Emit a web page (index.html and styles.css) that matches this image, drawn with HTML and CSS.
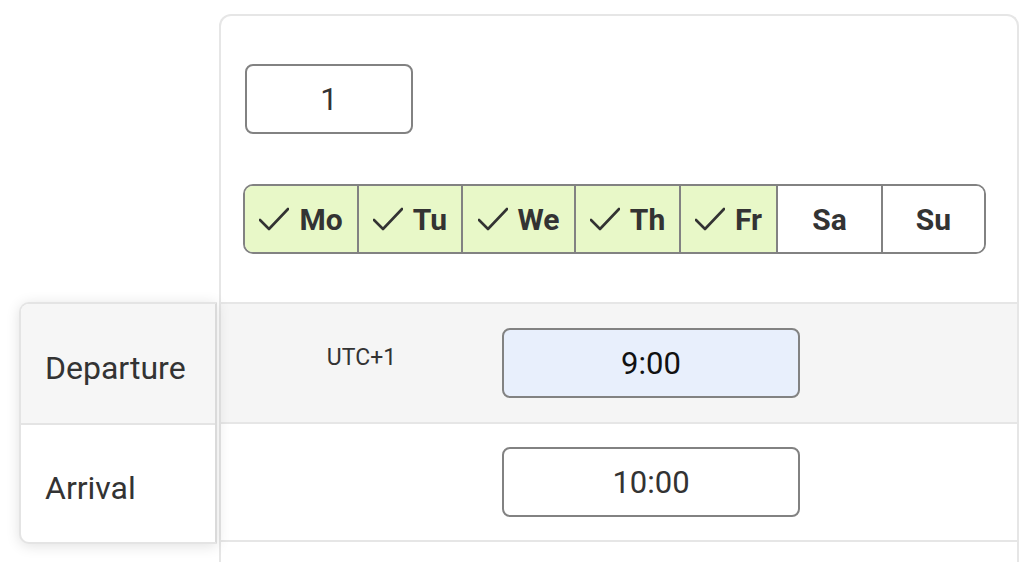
FILE: index.html
```html
<!DOCTYPE html>
<html lang="en">
<head>
<meta charset="utf-8">
<title>Schedule</title>
<link rel="stylesheet" href="styles.css">
</head>
<body>
<div class="page">
  <div class="labels">
    <div class="label-row label-row--shaded">Departure</div>
    <div class="label-row">Arrival</div>
  </div>
  <div class="card">
    <div class="card-top">
      <div class="count-input">1</div>
      <div class="days">
        <div class="day day--on"><svg class="check" viewBox="0 0 30 24" width="30" height="24"><polyline points="1,13 10,22 29,2"/></svg><span>Mo</span></div>
        <div class="day day--on"><svg class="check" viewBox="0 0 30 24" width="30" height="24"><polyline points="1,13 10,22 29,2"/></svg><span>Tu</span></div>
        <div class="day day--on"><svg class="check" viewBox="0 0 30 24" width="30" height="24"><polyline points="1,13 10,22 29,2"/></svg><span>We</span></div>
        <div class="day day--on"><svg class="check" viewBox="0 0 30 24" width="30" height="24"><polyline points="1,13 10,22 29,2"/></svg><span>Th</span></div>
        <div class="day day--on"><svg class="check" viewBox="0 0 30 24" width="30" height="24"><polyline points="1,13 10,22 29,2"/></svg><span>Fr</span></div>
        <div class="day"><span>Sa</span></div>
        <div class="day"><span>Su</span></div>
      </div>
    </div>
    <div class="rows">
      <div class="row row--shaded">
        <div class="tz">UTC+1</div>
        <div class="time time--active">9:00</div>
      </div>
      <div class="row">
        <div class="tz"></div>
        <div class="time">10:00</div>
      </div>
    </div>
  </div>
</div>
</body>
</html>
```

FILE: styles.css
```css
* { box-sizing: border-box; }

html, body {
  margin: 0;
  padding: 0;
  background: #ffffff;
  font-family: Roboto, "Liberation Sans", Arial, sans-serif;
  color: #333333;
  overflow: hidden;
}

.page {
  display: flex;
  align-items: flex-start;
  padding: 14px 0 0 19px;
  height: 562px;
}

.labels {
  position: relative;
  z-index: 1;
  width: 198px;
  margin-top: 288px;
  background: #ffffff;
  border: 2px solid #e4e4e4;
  border-right-color: #dadada;
  border-radius: 10px 0 0 10px;
  box-shadow: 0 2px 14px rgba(0, 0, 0, 0.12);
  overflow: hidden;
}

.label-row {
  height: 119px;
  display: flex;
  align-items: center;
  padding: 8px 0 0 24px;
  font-size: 32px;
  color: #333333;
}

.label-row + .label-row {
  border-top: 2px solid #e4e4e4;
}

.label-row--shaded { background: #f6f6f6; }

.card {
  margin-left: 2px;
  width: 800px;
  height: 560px;
  border: 2px solid #e6e6e6;
  border-bottom: none;
  border-radius: 12px 12px 0 0;
  background: #ffffff;
}

.card-top {
  padding: 48px 0 48px 22px;
}

.count-input {
  margin-left: 2px;
  width: 168px;
  height: 70px;
  border: 2px solid #828282;
  border-radius: 8px;
  display: flex;
  align-items: center;
  justify-content: center;
  font-size: 31px;
  color: #333333;
}

.days {
  margin-top: 50px;
  width: 743px;
  height: 70px;
  display: grid;
  grid-template-columns: 112px 104px 113px 105px 97px 105px 1fr;
  border: 2px solid #828282;
  border-radius: 10px;
  overflow: hidden;
}

.day {
  display: flex;
  align-items: center;
  justify-content: center;
  gap: 10px;
  font-size: 30px;
  font-weight: 700;
  color: #333333;
  background: #ffffff;
}

.day + .day { border-left: 2px solid #828282; }

.day--on { background: #e8f8c8; }

.check {
  fill: none;
  stroke: #333333;
  stroke-width: 2.6;
  stroke-linecap: round;
  stroke-linejoin: round;
  flex: none;
}

.rows { display: flex; flex-direction: column; }

.row {
  height: 120px;
  border-top: 2px solid #e6e6e6;
  display: grid;
  grid-template-columns: 281px 298px 1fr;
  align-items: center;
}

.row:last-child { border-bottom: 2px solid #e6e6e6; }

.row--shaded { background: #f5f5f5; }

.tz {
  align-self: start;
  padding-top: 40px;
  text-align: center;
  font-size: 23px;
  color: #333333;
}

.time {
  height: 70px;
  border: 2px solid #828282;
  border-radius: 8px;
  background: #ffffff;
  display: flex;
  align-items: center;
  justify-content: center;
  font-size: 31px;
  color: #333333;
}

.time--active {
  background: #e8effc;
  color: #111111;
}
```
